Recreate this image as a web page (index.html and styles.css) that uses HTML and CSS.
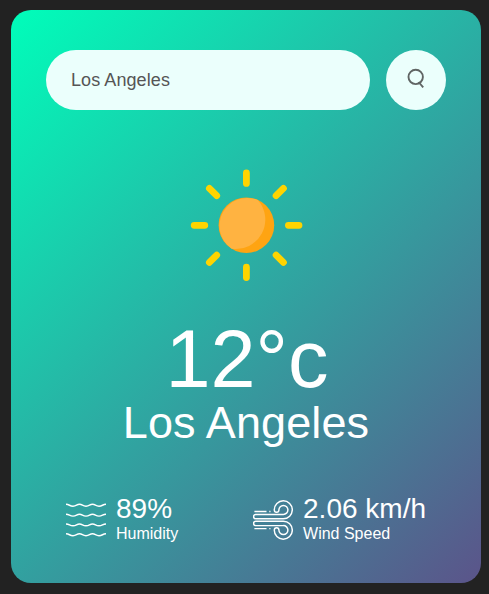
FILE: index.html
```html
<!DOCTYPE html>
<html lang="en">
<head>
<meta charset="UTF-8">
<title>Weather App</title>
<link rel="stylesheet" href="styles.css">
</head>
<body>
<main class="card">
  <div class="search">
    <input type="text" value="Los Angeles" spellcheck="false" aria-label="City">
    <button type="button" aria-label="Search">
      <svg class="search-icon" viewBox="0 0 20 22"><circle cx="9.7" cy="8.9" r="7.2"/><path d="M12.6 14l4.600 5.400"/></svg>
    </button>
  </div>
  <section class="weather">
    <svg class="weather-icon" viewBox="0 0 170 170">
      <circle class="sun-shade" cx="85.4" cy="85.2" r="27.8"/>
      <path class="sun" d="M96.8 60A27.8 27.8 0 0 0 70.6 108.7A29.4 29.4 0 0 0 96.8 60Z"/>
      <g class="rays">
        <path d="M85.4 33v10.4M85.4 127.2v10.4M33.2 85.3h10.6M127.4 85.3H138"/>
        <path d="M48.4 48.4l7.3 7.3M122.4 48.4l-7.3 7.3M48.4 122.4l7.3-7.3M122.4 122.4l-7.3-7.3"/>
      </g>
    </svg>
    <h1 class="temp">12°c</h1>
    <h2 class="city">Los Angeles</h2>
    <div class="details">
      <div class="col">
        <svg class="detail-icon" viewBox="0 0 40 40">
          <path d="M0 4.3C3.5 4.3 3.5 6.2 7 6.2S10.5 4.3 13.5 4.3S16.5 6.2 20 6.2S23.5 4.3 26.5 4.3S29.5 6.2 33 6.2S36.5 4.3 40 4.3"/>
          <path d="M0 14.2C3.5 14.2 3.5 16.1 7 16.1S10.5 14.2 13.5 14.2S16.5 16.1 20 16.1S23.5 14.2 26.5 14.2S29.5 16.1 33 16.1S36.5 14.2 40 14.2"/>
          <path d="M0 23.9C3.5 23.9 3.5 25.8 7 25.8S10.5 23.9 13.5 23.9S16.5 25.8 20 25.8S23.5 23.9 26.5 23.9S29.5 25.8 33 25.8S36.5 23.9 40 23.9"/>
          <path d="M0 33.8C3.5 33.8 3.5 35.7 7 35.7S10.5 33.8 13.5 33.8S16.5 35.7 20 35.7S23.5 33.8 26.5 33.8S29.5 35.7 33 35.7S36.5 33.8 40 33.8"/>
        </svg>
        <div class="reading">
          <p class="value">89%</p>
          <p>Humidity</p>
        </div>
      </div>
      <div class="col">
        <svg class="detail-icon" viewBox="0 0 40 40">
          <path d="M1.4 11.4H13.5M16.3 11.4h1.2M2.8 14.4H30.3A4.5 4.5 0 1 0 25.9 9.9C25.9 13 21.3 13 21.3 9.9A9 9 0 1 1 30.3 18.8H2.8A2.2 2.2 0 0 1 2.8 14.4Z"/>
          <path d="M1.4 28.6H13.5M16.3 28.6h1.2M2.8 25.6H30.3A4.5 4.5 0 1 1 25.9 30.1C25.9 27 21.3 27 21.3 30.1A9 9 0 1 0 30.3 21.2H2.8A2.2 2.2 0 0 0 2.8 25.6Z"/>
        </svg>
        <div class="reading">
          <p class="value">2.06 km/h</p>
          <p>Wind Speed</p>
        </div>
      </div>
    </div>
  </section>
</main>
</body>
</html>
```
FILE: styles.css
```css
* {
  margin: 0;
  padding: 0;
  box-sizing: border-box;
  font-family: "Liberation Sans", Arial, sans-serif;
}

body {
  background: #222;
  overflow: hidden;
}

.card {
  width: 470px;
  height: 573px;
  margin: 10px 0 0 11px;
  padding: 40px 35px;
  border-radius: 20px;
  background: linear-gradient(135deg, #00feba, #5b548a);
  color: #fff;
  text-align: center;
}

.search {
  display: flex;
  align-items: center;
}

.search input {
  flex: 1;
  min-width: 0;
  height: 60px;
  margin-right: 16px;
  padding: 10px 25px;
  border: 0;
  border-radius: 30px;
  outline: 0;
  background: #ebfffc;
  color: #555;
  font-size: 18px;
  letter-spacing: 0.08px;
}

.search button {
  display: flex;
  align-items: center;
  justify-content: center;
  width: 60px;
  height: 60px;
  border: 0;
  border-radius: 50%;
  background: #ebfffc;
}

.search-icon {
  width: 20px;
  height: 22px;
  margin-bottom: 2px;
  fill: none;
  stroke: #606564;
  stroke-width: 1.9;
}

.weather-icon {
  display: block;
  width: 170px;
  height: 170px;
  margin: 30px auto 13px;
}

.sun-shade {
  fill: #ffa412;
}

.sun {
  fill: #ffb341;
}

.rays {
  fill: none;
  stroke: #ffd400;
  stroke-width: 6.8;
  stroke-linecap: round;
}

.temp {
  padding-left: 2px;
  font-size: 81px;
  font-weight: 400;
  line-height: 72px;
}

.city {
  margin-top: 2px;
  font-size: 45px;
  font-weight: 400;
  line-height: 52px;
  letter-spacing: 0.1px;
}

.details {
  display: flex;
  align-items: center;
  justify-content: space-between;
  margin-top: 49px;
  padding: 0 20px;
}

.col {
  display: flex;
  align-items: center;
  text-align: left;
}

.detail-icon {
  width: 40px;
  height: 40px;
  margin: 0 10px 2px 0;
  fill: none;
  stroke: #fff;
  stroke-width: 1.45;
}

.reading {
  padding-top: 1px;
}

.value {
  margin-top: -6px;
  font-size: 28px;
}
```
